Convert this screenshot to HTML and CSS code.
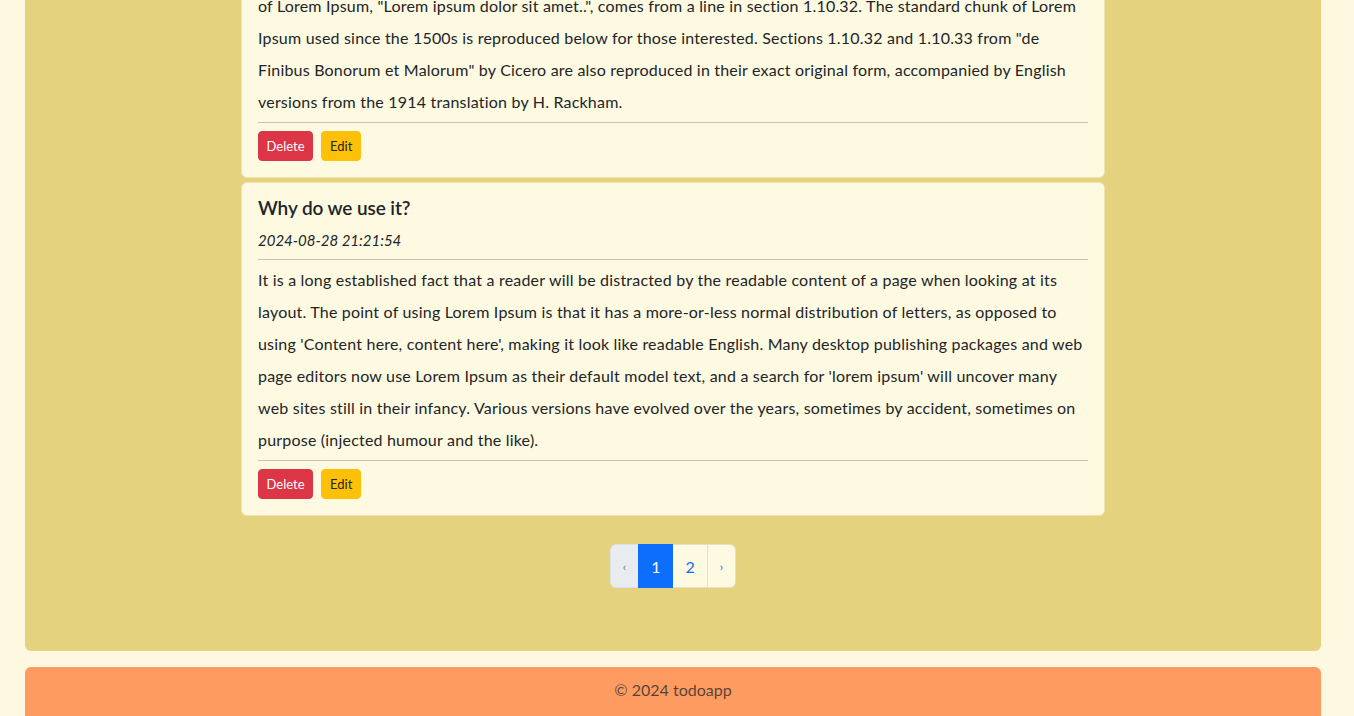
FILE: index.html
```html
<!DOCTYPE html>
<html lang="en">
<head>
<meta charset="utf-8">
<title>todoapp</title>
<link rel="stylesheet" href="styles.css">
</head>
<body>
<div class="page">
  <main class="board">
    <h1 class="board-title">Todo List</h1>
    <div class="todo-list">
      <article class="todo-card">
        <h5 class="todo-title">Where does it come from?</h5>
        <p class="todo-date">2024-08-28 21:20:37</p>
        <hr class="rule">
        <p class="todo-text">of Lorem Ipsum, "Lorem ipsum dolor sit amet..", comes from a line in section 1.10.32. The standard chunk of Lorem Ipsum used since the 1500s is reproduced below for those interested. Sections 1.10.32 and 1.10.33 from "de Finibus Bonorum et Malorum" by Cicero are also reproduced in their exact original form, accompanied by English versions from the 1914 translation by H. Rackham.</p>
        <hr class="rule rule-bottom">
        <div class="todo-actions">
          <button class="btn btn-delete" type="button">Delete</button>
          <button class="btn btn-edit" type="button">Edit</button>
        </div>
      </article>
      <article class="todo-card" id="anchor-card">
        <h5 class="todo-title">Why do we use it?</h5>
        <p class="todo-date">2024-08-28 21:21:54</p>
        <hr class="rule">
        <p class="todo-text">It is a long established fact that a reader will be distracted by the readable content of a page when looking at its layout. The point of using Lorem Ipsum is that it has a more-or-less normal distribution of letters, as opposed to using 'Content here, content here', making it look like readable English. Many desktop publishing packages and web page editors now use Lorem Ipsum as their default model text, and a search for 'lorem ipsum' will uncover many web sites still in their infancy. Various versions have evolved over the years, sometimes by accident, sometimes on purpose (injected humour and the like).</p>
        <hr class="rule rule-bottom">
        <div class="todo-actions">
          <button class="btn btn-delete" type="button">Delete</button>
          <button class="btn btn-edit" type="button">Edit</button>
        </div>
      </article>
    </div>
    <nav class="pager" aria-label="Pagination">
      <span class="pager-item pager-arrow is-disabled">&lsaquo;</span>
      <span class="pager-item is-active">1</span>
      <a class="pager-item" href="#">2</a>
      <a class="pager-item pager-arrow" href="#">&rsaquo;</a>
    </nav>
  </main>
  <footer class="site-footer">© 2024 todoapp</footer>
</div>
<script src="script.js"></script>
</body>
</html>
```

FILE: styles.css
```css
* { box-sizing: border-box; }

html, body {
  margin: 0;
  background: #fef8e0;
}

body {
  font-family: "Lato", "Noto Sans", sans-serif;
  font-size: 16px;
  color: #212529;
}

.page {
  padding: 24px 33px 40px 25px;
}

.board {
  background: #e5d27f;
  border-radius: 6px;
  padding: 24px 0 63px;
}

.board-title {
  margin: 0 0 24px;
  text-align: center;
  font-size: 32px;
  font-weight: 600;
}

.todo-list {
  width: 864px;
  margin: 0 auto;
  display: flex;
  flex-direction: column;
  gap: 4px;
}

.todo-card {
  background: #fef9e1;
  border: 1px solid #efe4ad;
  border-radius: 6px;
  padding: 16px;
}

.todo-title {
  margin: 0 0 11px;
  font-size: 19px;
  line-height: 18px;
  font-weight: 600;
  letter-spacing: -0.1px;
}

.todo-date {
  margin: 0;
  font-style: italic;
  font-size: 15px;
  line-height: 24px;
}

.rule {
  border: 0;
  border-top: 1px solid #212529;
  opacity: 0.25;
  margin: 7px 0 4px;
}

.rule-bottom {
  margin: 4px 0 8px;
}

.todo-text {
  margin: 0;
  line-height: 32px;
  letter-spacing: 0.2px;
}

.todo-actions {
  display: flex;
  gap: 8px;
}

.btn {
  font-family: inherit;
  font-size: 13px;
  line-height: 18px;
  padding: 5px 8px;
  border: 1px solid transparent;
  border-radius: 4px;
  cursor: pointer;
}

.btn-delete {
  background: #dc3545;
  border-color: #dc3545;
  color: #fff;
  padding: 5px 7.5px;
}

.btn-edit {
  background: #ffc107;
  border-color: #ffc107;
  color: #212529;
}

.pager {
  display: flex;
  justify-content: center;
  margin-top: 28px;
}

.pager-item {
  display: flex;
  align-items: center;
  justify-content: center;
  height: 44px;
  padding: 0 12px;
  border: 1px solid #e8e0c0;
  margin-left: -1px;
  background: #fef9e1;
  color: #0d6efd;
  text-decoration: none;
  font-size: 16px;
}

.pager-item:first-child {
  margin-left: 0;
  border-radius: 6px 0 0 6px;
}

.pager-item:last-child {
  border-radius: 0 6px 6px 0;
}

.pager-arrow {
  font-size: 12px;
  padding: 0 12px;
}

.is-disabled {
  background: #e9ecef;
  color: #6c757d;
  border-color: #dee2e6;
}

.is-active {
  background: #0d6efd;
  border-color: #0d6efd;
  color: #fff;
  position: relative;
}

.site-footer {
  margin-top: 16px;
  background: #fe9b61;
  border-radius: 6px;
  padding: 11px 0 20px;
  line-height: 24px;
  text-align: center;
  color: rgba(33, 37, 41, 0.75);
}
```

FILE: script.js
```js
(function () {
  var card = document.getElementById('anchor-card');
  var top = card.getBoundingClientRect().top + window.scrollY;
  window.scrollTo(0, top - 182);
})();
```
